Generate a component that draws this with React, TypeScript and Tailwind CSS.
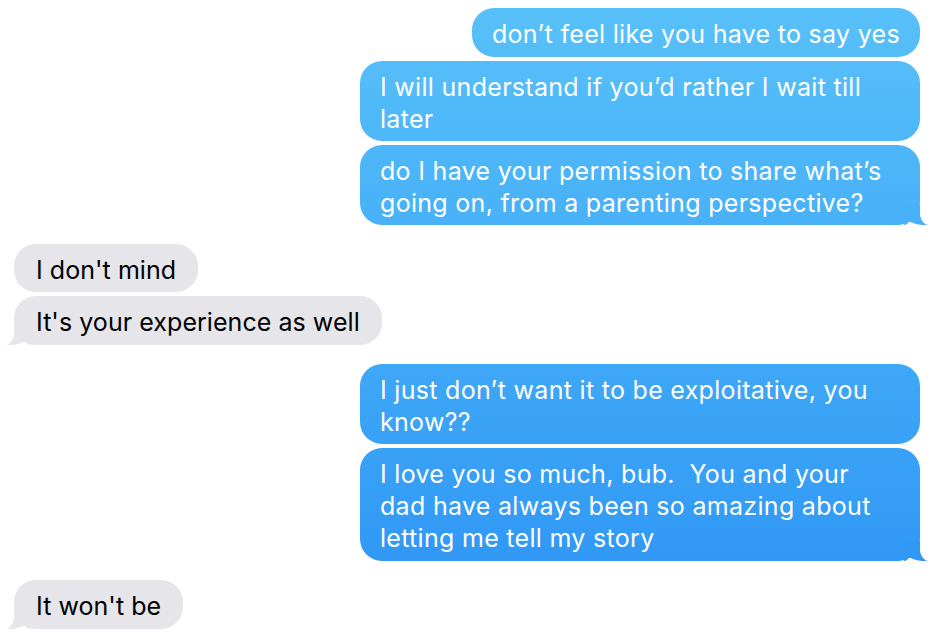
const blue =
  "relative rounded-[22px] bg-fixed bg-linear-to-b from-[#58c1f9] to-[#2b93f4] px-5 pt-[10px] pb-[6px] text-white tracking-[0.3px]";
const gray =
  "relative rounded-[22px] bg-[#e5e5ea] px-[22px] pt-[10px] pb-[6px] text-black tracking-[0.05px]";

function TailRight({ fill }: { fill: string }) {
  return (
    <svg className="absolute -right-[8px] bottom-0" width="24" height="20" viewBox="0 0 24 20">
      <path d="M0 0 H16 V8 C16 14 19 18 23.5 20 C17 20.6 10.5 19 5.5 16.5 C4 18 2 20 0 20 Z" fill={fill} />
    </svg>
  );
}

function TailLeft() {
  return (
    <svg className="absolute -left-[8px] bottom-0" width="24" height="20" viewBox="0 0 24 20">
      <path d="M24 0 H8 V8 C8 14 5 18 0.5 20 C7 20.6 13.5 19 18.5 16.5 C20 18 22 20 24 20 Z" fill="#e5e5ea" />
    </svg>
  );
}

export default function App() {
  return (
    <div
      className="flex min-h-screen flex-col bg-white pt-2 pr-4 pl-[14px] text-[25px] leading-8"
      style={{ fontFamily: "Inter, 'Noto Sans', sans-serif" }}
    >
      <div className="flex flex-col items-end gap-1">
        <div className={`${blue} pb-[7px]`}>don’t feel like you have to say yes</div>
        <div className={`${blue} w-[560px]`}>
          I will understand if you’d rather I wait till
          <br />
          later
        </div>
        <div className={`${blue} w-[560px]`}>
          do I have your permission to share what’s
          <br />
          going on, from a parenting perspective?
          <TailRight fill="#48b1f7" />
        </div>
      </div>

      <div className="mt-[19px] flex flex-col items-start gap-1">
        <div className={gray}>I don't mind</div>
        <div className={`${gray} pb-[7px]`}>
          It's your experience as well
          <TailLeft />
        </div>
      </div>

      <div className="mt-[19px] flex flex-col items-end gap-1">
        <div className={`${blue} w-[560px]`}>
          I just don’t want it to be exploitative, you
          <br />
          know??
        </div>
        <div className={`${blue} w-[560px] pb-[7px]`}>
          I love you so much, bub.&nbsp; You and your
          <br />
          dad have always been so amazing about
          <br />
          letting me tell my story
          <TailRight fill="#3199f5" />
        </div>
      </div>

      <div className="mt-[19px] flex flex-col items-start gap-1">
        <div className={`${gray} pb-[7px]`}>
          It won't be
          <TailLeft />
        </div>
      </div>
    </div>
  );
}
